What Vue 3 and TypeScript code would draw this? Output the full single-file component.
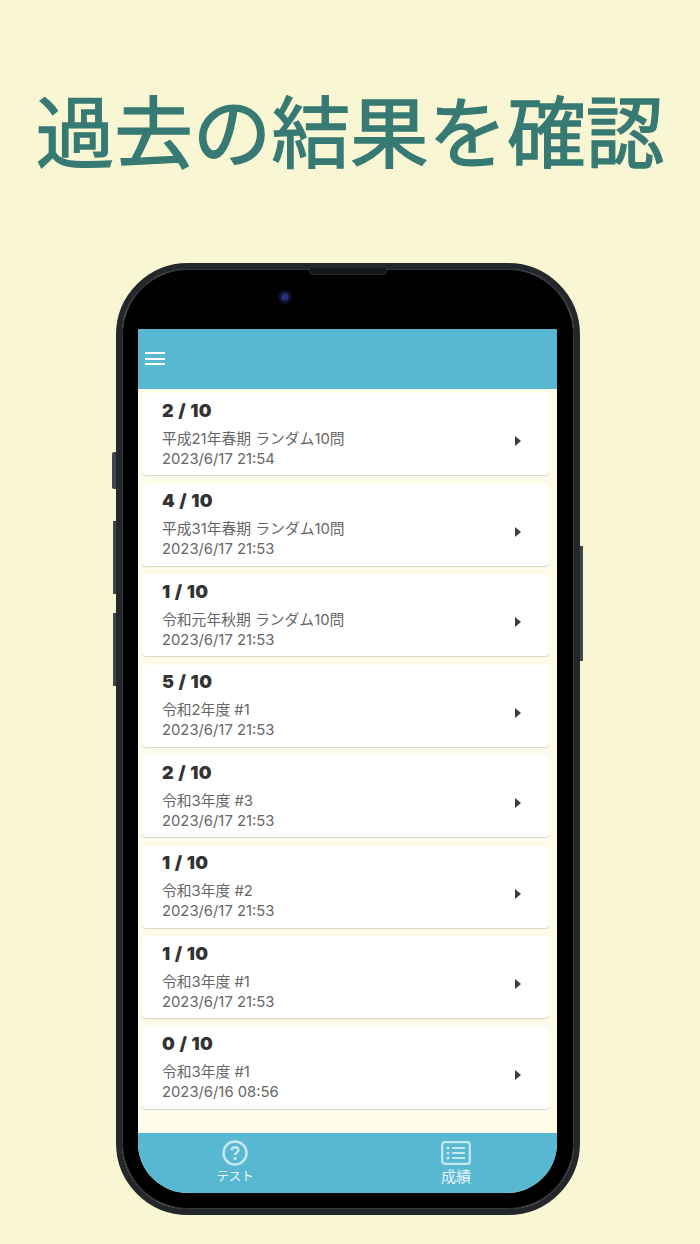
<script setup lang="ts">
interface Result { score: string; title: string; date: string }
const results: Result[] = [
  { score: '2 / 10', title: '平成21年春期 ランダム10問', date: '2023/6/17 21:54' },
  { score: '4 / 10', title: '平成31年春期 ランダム10問', date: '2023/6/17 21:53' },
  { score: '1 / 10', title: '令和元年秋期 ランダム10問', date: '2023/6/17 21:53' },
  { score: '5 / 10', title: '令和2年度 #1', date: '2023/6/17 21:53' },
  { score: '2 / 10', title: '令和3年度 #3', date: '2023/6/17 21:53' },
  { score: '1 / 10', title: '令和3年度 #2', date: '2023/6/17 21:53' },
  { score: '1 / 10', title: '令和3年度 #1', date: '2023/6/17 21:53' },
  { score: '0 / 10', title: '令和3年度 #1', date: '2023/6/16 08:56' }
]
</script>

<template>
  <div class="page">
    <h1 class="headline">過去の結果を確認</h1>
    <div class="phone">
      <span class="side-btn mute"></span>
      <span class="side-btn vol-up"></span>
      <span class="side-btn vol-down"></span>
      <span class="side-btn power"></span>
      <div class="bezel">
        <span class="speaker"></span>
        <span class="camera"></span>
        <div class="screen">
          <header class="topbar">
            <span class="menu"><i></i><i></i><i></i></span>
          </header>
          <main class="list">
            <article v-for="(r, i) in results" :key="i" class="card">
              <div class="info">
                <div class="score">{{ r.score }}</div>
                <div class="title">{{ r.title }}</div>
                <div class="date">{{ r.date }}</div>
              </div>
              <svg class="chev" width="6" height="10" viewBox="0 0 6 10"><path d="M0 0L6 5L0 10Z" fill="#3a3d42" /></svg>
            </article>
          </main>
          <footer class="tabs">
            <div class="tab">
              <svg width="28" height="26" viewBox="0 0 28 28">
                <circle cx="14" cy="14" r="12.4" fill="none" stroke="#c6e8f0" stroke-width="2.6" />
                <path d="M10.4 11.2c0-2.1 1.6-3.4 3.7-3.4s3.6 1.2 3.6 3.1c0 2.7-3.6 2.6-3.6 5.4" fill="none" stroke="#c6e8f0" stroke-width="2.6" />
                <circle cx="14.1" cy="20" r="1.7" fill="#c6e8f0" />
              </svg>
              <span class="tab-label kana">テスト</span>
            </div>
            <div class="tab">
              <svg width="30" height="24" viewBox="0 0 30 24">
                <rect x="1.2" y="1.2" width="27.6" height="21.6" rx="2.5" fill="none" stroke="#c6e8f0" stroke-width="2.2" />
                <circle cx="7" cy="7" r="1.5" fill="#c6e8f0" />
                <circle cx="7" cy="12" r="1.5" fill="#c6e8f0" />
                <circle cx="7" cy="17" r="1.5" fill="#c6e8f0" />
                <path d="M11 7H24M11 12H24M11 17H24" stroke="#c6e8f0" stroke-width="2.2" />
              </svg>
              <span class="tab-label">成績</span>
            </div>
          </footer>
        </div>
      </div>
    </div>
  </div>
</template>

<style>
html, body { margin: 0; background: #f9f6d3; }
</style>

<style scoped>
.page {
  width: 700px;
  height: 1244px;
  overflow: hidden;
  background: #f9f6d3;
  display: flex;
  flex-direction: column;
  align-items: center;
}
.headline {
  margin: 0;
  height: 263px;
  box-sizing: border-box;
  padding-top: 74px;
  font: 400 78.6px/108px "Noto Sans CJK JP", sans-serif;
  -webkit-text-stroke: 1.4px #377a74;
  color: #377a74;
  white-space: nowrap;
}
.phone {
  position: relative;
  width: 464px;
  height: 952px;
  margin-left: -4px;
  flex: none;
}
.side-btn {
  position: absolute;
  width: 4px;
  background: #3f454c;
}
.mute { left: -4px; top: 189px; height: 37px; border-radius: 2px 0 0 2px; }
.vol-up { left: -3px; top: 258px; height: 73px; width: 3px; }
.vol-down { left: -3px; top: 350px; height: 73px; width: 3px; }
.power { right: -3px; top: 283px; height: 115px; width: 3px; }
.bezel {
  position: relative;
  box-sizing: border-box;
  width: 100%;
  height: 100%;
  padding: 60px 17px 16px 16px;
  background: #000;
  background-clip: padding-box;
  border: 6px solid #23272c;
  border-radius: 72px;
  box-shadow: inset 0 0 0 1px #32373d;
}
.speaker {
  position: absolute;
  left: 187px;
  top: -1px;
  width: 78px;
  height: 7px;
  background: #15171a;
  border: 1px solid #2c3036;
  border-top: 0;
  box-sizing: border-box;
  border-radius: 0 0 5px 5px;
}
.camera {
  position: absolute;
  left: 156px;
  top: 21px;
  width: 14px;
  height: 14px;
  border-radius: 50%;
  background: radial-gradient(circle, #2a2f80 0 30%, #12142f 45%, #08080f 75%);
}
.screen {
  width: 100%;
  height: 100%;
  display: flex;
  flex-direction: column;
  overflow: hidden;
  background: #fdfce8;
  border-radius: 2px 2px 50px 50px;
}
.topbar {
  height: 60px;
  flex: none;
  background: #58b7d1;
  display: flex;
  align-items: center;
  padding-left: 7px;
}
.menu {
  width: 20px;
  height: 13px;
  margin-top: -1px;
  display: flex;
  flex-direction: column;
  justify-content: space-between;
}
.menu i {
  display: block;
  height: 2px;
  background: #fff;
}
.list {
  flex: 1;
  min-height: 0;
  box-sizing: border-box;
  padding: 4.3px 8px 0 4px;
  display: flex;
  flex-direction: column;
  gap: 8.5px;
}
.card {
  flex: none;
  height: 82px;
  box-sizing: border-box;
  padding: 1px 28px 0 20px;
  background: #fff;
  border-radius: 4px;
  box-shadow: 0 1px 1px #d8d6c4;
  display: flex;
  align-items: center;
  justify-content: space-between;
}
.info {
  display: flex;
  flex-direction: column;
}
.score {
  font: 900 18px/20px Inter, sans-serif;
  letter-spacing: 0.5px;
  color: #333;
  margin-bottom: 8px;
}
.title,
.date {
  font: 400 14.8px/20px Inter, "Noto Sans CJK JP", sans-serif;
  color: #666;
}
.chev {
  margin-top: 13px;
}
.tabs {
  height: 60px;
  flex: none;
  background: #58b7d1;
  display: grid;
  grid-template-columns: 194px 248px;
}
.tab {
  display: flex;
  flex-direction: column;
  align-items: center;
  justify-content: flex-start;
  padding-top: 7px;
  height: 60px;
  box-sizing: border-box;
}
.tab svg { height: 26px; flex: none; }
.tab-label {
  font: 400 15px/18px "Noto Sans CJK JP", sans-serif;
  color: #eef8fb;
  margin-top: 1px;
}
.kana {
  font-size: 12.4px;
}
</style>
